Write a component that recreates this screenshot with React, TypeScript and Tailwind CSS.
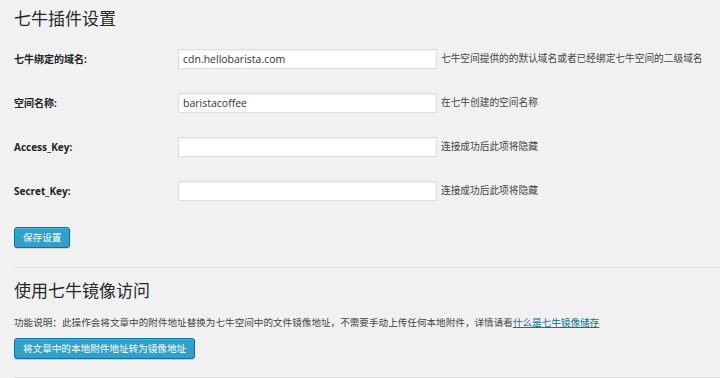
const font = "font-['Open_Sans','Noto_Sans_CJK_SC',sans-serif]";

type Row = { label: string; value: string; hint: string };

const rows: Row[] = [
  { label: "七牛绑定的域名:", value: "cdn.hellobarista.com", hint: "七牛空间提供的的默认域名或者已经绑定七牛空间的二级域名" },
  { label: "空间名称:", value: "baristacoffee", hint: "在七牛创建的空间名称" },
  { label: "Access_Key:", value: "", hint: "连接成功后此项将隐藏" },
  { label: "Secret_Key:", value: "", hint: "连接成功后此项将隐藏" },
];

function Field({ label, value, hint }: Row) {
  return (
    <div className="flex h-[20px] items-center">
      <label className="w-[164px] shrink-0 text-[10px] font-bold text-[#222]">{label}</label>
      <input
        className="h-[20px] w-[259px] border border-[#ddd] bg-white px-[4px] text-[10.5px] text-[#333] shadow-[inset_0_1px_2px_rgba(0,0,0,0.07)] outline-none"
        defaultValue={value}
      />
      <span className="ml-[4px] whitespace-nowrap text-[9.7px] text-[#444]">{hint}</span>
    </div>
  );
}

function BlueButton({ children }: { children: string }) {
  return (
    <div className="flex">
      <button className="h-[21px] rounded-[3px] border border-[#0074a2] bg-[#2ea2cc] px-[8px] text-[9.6px] leading-[19px] text-white shadow-[inset_0_1px_0_rgba(120,200,230,0.5),0_1px_0_rgba(0,0,0,0.15)]">
        {children}
      </button>
    </div>
  );
}

export default function App() {
  return (
    <div className={`${font} h-[378px] w-[720px] overflow-hidden bg-[#f1f1f1] pl-[14px]`}>
      <h1 className="pt-[10px] text-[17px] leading-[18px] font-normal text-[#23282d]">七牛插件设置</h1>

      <div className="mt-[21px] flex flex-col gap-[24px]">
        {rows.map((r) => (
          <Field key={r.label} {...r} />
        ))}
      </div>

      <div className="mt-[26px]">
        <BlueButton>保存设置</BlueButton>
      </div>

      <div className="mt-[19px] border-t border-[#ddd]" />

      <h2 className="mt-[14px] text-[17px] leading-[18px] font-normal text-[#23282d]">使用七牛镜像访问</h2>

      <p className="mt-[16px] text-[9.6px] leading-[14px] whitespace-nowrap text-[#444]">
        功能说明：此操作会将文章中的附件地址替换为七牛空间中的文件镜像地址，不需要手动上传任何本地附件，详情请看
        <a className="text-[#0074a2] underline">什么是七牛镜像储存</a>
      </p>

      <div className="mt-[8px]">
        <BlueButton>将文章中的本地附件地址转为镜像地址</BlueButton>
      </div>

      <div className="mt-[18px] border-t border-[#ddd]" />
    </div>
  );
}
